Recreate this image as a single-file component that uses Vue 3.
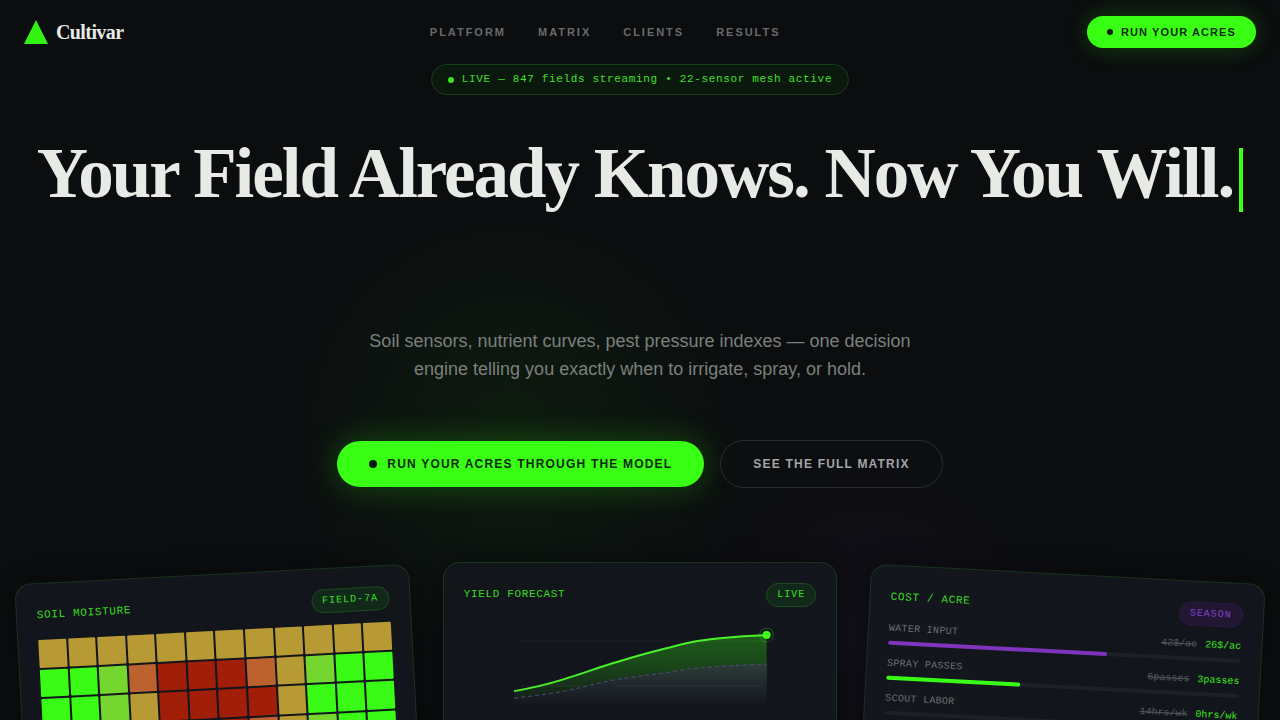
<script setup>
import { ref } from "vue";

const links = ["Platform", "Matrix", "Clients", "Results"];

// one letter per cell: y dry, l fair, g good, o low, r critical
const soil = [
	"yyyyyyyyyyyy",
	"gglorrroylgg",
	"gglyrrrryggg",
	"gglyyrroylgg",
	"ggglyoyylggg",
	"gggglyylgggg",
];

const costs = ref([
	{ label: "WATER INPUT", before: "42$/ac", after: "26$/ac", fill: 62, color: "purple" },
	{ label: "SPRAY PASSES", before: "6passes", after: "3passes", fill: 38, color: "green" },
	{ label: "SCOUT LABOR", before: "14hrs/wk", after: "0hrs/wk", fill: 0, color: "green" },
]);
</script>

<template>
	<div class="page">
		<header class="topbar">
			<a class="logo" href="#">
				<svg width="24" height="24" viewBox="0 0 24 24" aria-hidden="true">
					<path d="M12 0L24 24H0Z" fill="#33f312" />
				</svg>
				<span>Cultivar</span>
			</a>
			<nav class="links">
				<a v-for="link in links" :key="link" :href="'#' + link.toLowerCase()">{{ link }}</a>
			</nav>
			<button class="btn btn-small" type="button"><i class="dot" />Run your acres</button>
		</header>

		<main class="hero">
			<p class="status"><i class="dot" />LIVE — 847 fields streaming • 22-sensor mesh active</p>
			<h1>Your Field Already Knows. Now You Will.<span class="cursor" /></h1>
			<p class="lead">
				Soil sensors, nutrient curves, pest pressure indexes — one decision engine
				telling you exactly when to irrigate, spray, or hold.
			</p>
			<div class="actions">
				<button class="btn btn-large" type="button">
					<i class="dot" />Run your acres through the model
				</button>
				<button class="btn btn-ghost" type="button">See the full matrix</button>
			</div>

			<section class="cards">
				<article class="card tilt-left">
					<div class="card-head">
						<h2>SOIL MOISTURE</h2>
						<span class="badge">FIELD-7A</span>
					</div>
					<div class="heatmap">
						<template v-for="(row, r) in soil" :key="r">
							<i v-for="(cell, c) in row" :key="c" :class="'cell-' + cell" />
						</template>
					</div>
				</article>

				<article class="card">
					<div class="card-head">
						<h2>YIELD FORECAST</h2>
						<span class="badge">LIVE</span>
					</div>
					<svg class="chart" viewBox="0 0 352 180" role="img" aria-label="Yield forecast">
						<defs>
							<linearGradient id="yield" x1="0" y1="17" x2="0" y2="88" gradientUnits="userSpaceOnUse">
								<stop offset="0" stop-color="#39ff14" stop-opacity=".3" />
								<stop offset=".45" stop-color="#39ff14" stop-opacity=".2" />
								<stop offset="1" stop-color="#39ff14" stop-opacity="0" />
							</linearGradient>
							<linearGradient id="base" x1="0" y1="45" x2="0" y2="88" gradientUnits="userSpaceOnUse">
								<stop offset="0" stop-color="#2c3d38" />
								<stop offset=".5" stop-color="#20272c" />
								<stop offset="1" stop-color="#13151b" />
							</linearGradient>
						</defs>
						<path d="M56 22H302M56 67H302" stroke="#fff" stroke-opacity=".05" />
						<path
							d="M50 72C67 69 84 65 100 60C116 55 133 49 149 44C166 39 182 34 199 30C211 27 222 24 233 22C256 18 278 17 302 16V88H50Z"
							fill="url(#yield)"
						/>
						<path
							d="M50 79C67 77 84 75 100 72C116 69 132 64 149 61C166 58 182 56 199 54C211 52 222 50 233 49C256 47 278 46 302 45V88H50Z"
							fill="url(#base)"
						/>
						<path d="M150 67H298" stroke="#fff" stroke-opacity=".06" />
						<path
							d="M50 79C67 77 84 75 100 72C116 69 132 64 149 61C166 58 182 56 199 54C211 52 222 50 233 49C256 47 278 46 302 45"
							fill="none"
							stroke="#514a78"
							stroke-dasharray="4 3"
						/>
						<path
							d="M50 72C67 69 84 65 100 60C116 55 133 49 149 44C166 39 182 34 199 30C211 27 222 24 233 22C256 18 278 17 302 16"
							fill="none"
							stroke="#4bf02c"
							stroke-width="2"
						/>
						<circle cx="302" cy="16" r="7" fill="none" stroke="#39ff14" stroke-opacity=".25" />
						<circle cx="302" cy="16" r="4" fill="#39ff14" />
					</svg>
				</article>

				<article class="card tilt-right">
					<div class="card-head">
						<h2>COST / ACRE</h2>
						<span class="badge badge-purple">SEASON</span>
					</div>
					<ul class="costs">
						<li v-for="cost in costs" :key="cost.label">
							<div class="cost-row">
								<span class="cost-label">{{ cost.label }}</span>
								<span class="cost-values"><s>{{ cost.before }}</s><b>{{ cost.after }}</b></span>
							</div>
							<div class="track">
								<div class="fill" :class="cost.color" :style="{ width: cost.fill + '%' }" />
							</div>
						</li>
					</ul>
				</article>
			</section>
		</main>
	</div>
</template>

<style>
body {
	background: #0a0c0e;
}
</style>

<style scoped>
* {
	box-sizing: border-box;
	margin: 0;
	padding: 0;
}

.page {
	height: 100vh;
	overflow: hidden;
	font-family: "Liberation Sans", Arial, sans-serif;
	color: #e8eae6;
	background:
		radial-gradient(circle at 40% 60%, rgba(57, 255, 20, 0.06), transparent 250px),
		radial-gradient(circle at 68% 88%, rgba(123, 47, 190, 0.06), transparent 200px),
		#0b0d0f;
}

.topbar {
	display: flex;
	align-items: center;
	justify-content: space-between;
	height: 64px;
	padding: 0 24px;
}

.logo {
	display: flex;
	align-items: center;
	gap: 8px;
	color: #e8eae6;
	font: bold 20px "Liberation Serif", serif;
	letter-spacing: -0.03em;
	text-decoration: none;
}

.links {
	display: flex;
	gap: 32px;
}

.links a {
	color: #686a6c;
	font-size: 11px;
	font-weight: bold;
	letter-spacing: 0.18em;
	text-transform: uppercase;
	text-decoration: none;
}

.btn {
	display: flex;
	align-items: center;
	border: 0;
	border-radius: 99px;
	background: #39ff14;
	color: #0a2a0c;
	font-family: inherit;
	font-weight: bold;
	text-transform: uppercase;
	cursor: pointer;
}

.dot {
	width: 6px;
	height: 6px;
	border-radius: 50%;
	background: currentColor;
}

.btn .dot {
	background: #0a1a0c;
}

.btn-small {
	gap: 8px;
	height: 32px;
	padding: 0 20px;
	font-size: 11px;
	letter-spacing: 0.1em;
	box-shadow: 0 0 24px rgba(57, 255, 20, 0.22);
}

.btn-large {
	gap: 10px;
	height: 46px;
	padding: 0 32px;
	font-size: 12px;
	letter-spacing: 0.1em;
	box-shadow: 0 0 32px rgba(57, 255, 20, 0.25);
}

.btn-large .dot {
	width: 8px;
	height: 8px;
}

.btn-ghost {
	height: 48px;
	padding: 0 32px;
	border: 1px solid #292b2e;
	background: transparent;
	color: #a3a5a5;
	font-size: 12px;
	letter-spacing: 0.1em;
}

.hero {
	display: flex;
	flex-direction: column;
	align-items: center;
}

.status {
	display: flex;
	align-items: center;
	gap: 8px;
	padding: 6px 16px;
	border: 1px solid #1a3d1a;
	border-radius: 99px;
	background: #0a180e;
	color: #40e024;
	font-family: "Liberation Mono", monospace;
	font-size: 11px;
	line-height: 17px;
	letter-spacing: 0.06em;
}

h1 {
	min-height: 152px;
	margin-top: 40px;
	font: bold 71px/76px "Liberation Serif", serif;
	letter-spacing: -2px;
	white-space: nowrap;
}

.cursor {
	display: inline-block;
	width: 4px;
	height: 64px;
	margin-left: 6px;
	background: #39ff14;
	vertical-align: -15px;
}

.lead {
	max-width: 560px;
	margin-top: 40px;
	color: #7c807d;
	font-size: 18px;
	line-height: 28px;
	text-align: center;
}

.actions {
	display: flex;
	align-items: center;
	gap: 16px;
	margin-top: 57px;
}

.cards {
	display: grid;
	grid-template-columns: repeat(3, 1fr);
	gap: 32px;
	width: 100%;
	margin-top: 74px;
	padding: 0 16px;
}

.card {
	height: 280px;
	padding: 20px;
	border: 1px solid #1a321e;
	border-radius: 16px;
	background: rgba(20, 23, 29, 0.85);
	box-shadow: 0 0 24px rgba(0, 0, 0, 0.4);
	transform-origin: top center;
}

.tilt-left {
	transform: translate(-2px, 12px) rotate(-3deg);
}

.tilt-right {
	transform: translate(2px, 12px) rotate(3deg);
}

.card-head {
	display: flex;
	align-items: flex-start;
	justify-content: space-between;
	margin-bottom: 12px;
	font-family: "Liberation Mono", monospace;
}

.card-head h2 {
	color: #38dd20;
	font-size: 11px;
	font-weight: normal;
	line-height: 22px;
	letter-spacing: 0.06em;
}

.badge {
	padding: 3px 10px;
	border: 1px solid #1e4a20;
	border-radius: 99px;
	background: #12281a;
	color: #3de023;
	font-size: 10px;
	line-height: 16px;
	letter-spacing: 0.1em;
}

.badge-purple {
	border-color: #2b1b40;
	background: #221733;
	color: #8a3fd0;
}

.heatmap {
	display: grid;
	grid-template-columns: repeat(12, 1fr);
	gap: 2px;
}

.heatmap i {
	aspect-ratio: 1;
	border-radius: 1px;
}

.cell-y {
	background: #b89a35;
}

.cell-l {
	background: #76d630;
}

.cell-g {
	background: #39fb16;
}

.cell-o {
	background: #bd622f;
}

.cell-r {
	background: #a11f09;
}

.chart {
	display: block;
	width: 100%;
}

.costs {
	display: grid;
	gap: 12px;
	list-style: none;
	font-family: "Liberation Mono", monospace;
	font-size: 10px;
	line-height: 14px;
}

.cost-row {
	display: flex;
	justify-content: space-between;
	margin-bottom: 5px;
}

.cost-label {
	color: #6d7072;
	letter-spacing: 0.03em;
}

.cost-values {
	display: flex;
	gap: 8px;
}

.cost-values s {
	color: #55585b;
}

.cost-values b {
	color: #39e81d;
	font-weight: normal;
}

.track {
	height: 4px;
	border-radius: 2px;
	background: #1d2024;
}

.fill {
	height: 100%;
	border-radius: 2px;
}

.fill.purple {
	background: #7e34bd;
}

.fill.green {
	background: #39ff14;
}
</style>
